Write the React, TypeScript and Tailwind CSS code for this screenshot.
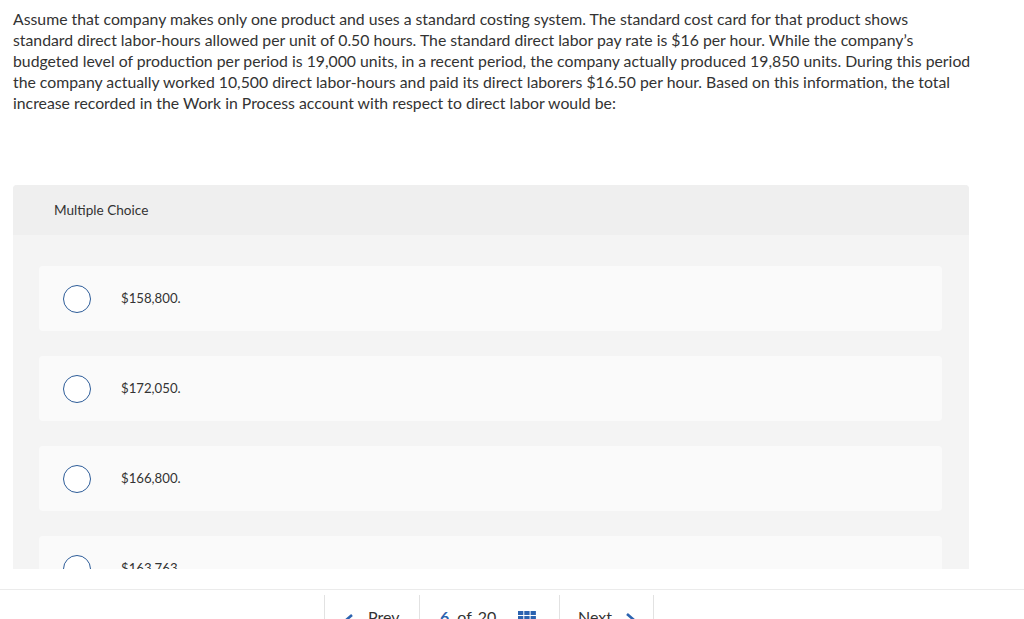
import React from "react";

const lines = [
  "Assume that company makes only one product and uses a standard costing system. The standard cost card for that product shows",
  "standard direct labor-hours allowed per unit of 0.50 hours. The standard direct labor pay rate is $16 per hour. While the company\u2019s",
  "budgeted level of production per period is 19,000 units, in a recent period, the company actually produced 19,850 units. During this period",
  "the company actually worked 10,500 direct labor-hours and paid its direct laborers $16.50 per hour. Based on this information, the total",
  "increase recorded in the Work in Process account with respect to direct labor would be:",
];

const options = ["$158,800.", "$172,050.", "$166,800.", "$163,763."];

export default function App() {
  return (
    <div className="w-[1024px] h-[619px] overflow-hidden bg-white text-[#333]" style={{ fontFamily: "Lato, 'Open Sans', sans-serif" }}>
      <div className="h-[569px] overflow-hidden">
        <div className="pl-[13px] pt-[8px] text-[15.8px] leading-[21px]">
          {lines.map((l, i) => (
            <div key={i} className="whitespace-nowrap">{l}</div>
          ))}
        </div>
        <div className="ml-[13px] mt-[72px] w-[956px] rounded-t-[4px] bg-[#f4f4f4]">
          <div className="h-[50px] flex items-center pl-[41px] bg-[#efefef] rounded-t-[4px] text-[13.6px]">Multiple Choice</div>
          <div className="pt-[31px] px-[26px] flex flex-col gap-[25px]">
            {options.map((o) => (
              <div key={o} className="h-[65px] w-[903px] rounded-[4px] bg-[#fafafa] flex items-center">
                <div className="ml-[24px] w-[28px] h-[28px] rounded-full border border-[#2d5c98] bg-white" />
                <div className="ml-[30px] text-[13.2px]">{o}</div>
              </div>
            ))}
          </div>
        </div>
      </div>
      <div className="mt-[20px] border-t border-[#ebebeb] pt-[5px] pl-[324px] flex">
        <div className="w-[95px] h-[40px] border-l border-[#e2e2e2] flex items-start pt-[12px] pl-[17px] text-[16px] leading-[20px]">
          <svg width="13" height="16" viewBox="0 0 13 16" className="mt-[6px]"><path d="M10 2 L3 8 L10 14" stroke="#2c63b0" strokeWidth="2.6" fill="none" /></svg>
          <span className="ml-[13px]">Prev</span>
        </div>
        <div className="w-[140px] h-[40px] border-l border-[#e2e2e2] flex items-start pt-[12px] pl-[20px] text-[16px] leading-[20px]">
          <span className="text-[#2c63b0] font-bold">6</span>
          <span className="ml-[8px]">of</span>
          <span className="ml-[6px]">20</span>
          <svg width="18" height="14" viewBox="0 0 18 14" className="ml-[22px] mt-[4px]">
            {[0, 1, 2].map((r) => [0, 1, 2].map((c) => (
              <rect key={`${r}${c}`} x={c * 6.3} y={r * 5} width="5.3" height="4" fill="#2c63b0" />
            )))}
          </svg>
        </div>
        <div className="w-[95px] h-[40px] border-l border-r border-[#e2e2e2] flex items-start pt-[12px] pl-[18px] text-[16px] leading-[20px]">
          <span>Next</span>
          <svg width="13" height="16" viewBox="0 0 13 16" className="ml-[12px] mt-[5px]"><path d="M3 2 L10 8 L3 14" stroke="#2c63b0" strokeWidth="2.6" fill="none" /></svg>
        </div>
      </div>
    </div>
  );
}
